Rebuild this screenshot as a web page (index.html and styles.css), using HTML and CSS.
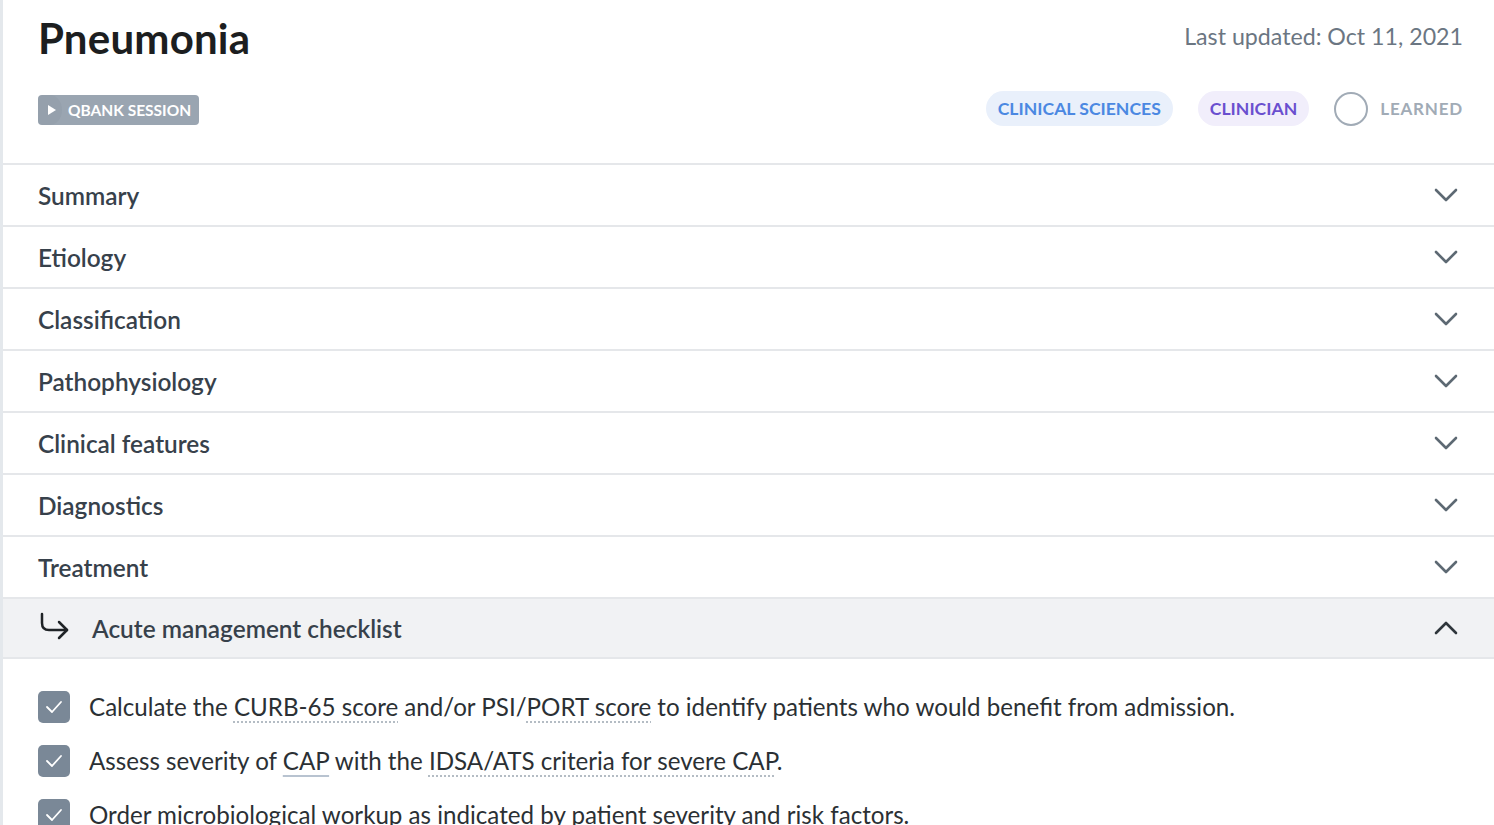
FILE: index.html
```html
<!DOCTYPE html>
<html lang="en">

<head>
    <meta charset="UTF-8">
    <meta name="viewport" content="width=device-width, initial-scale=1.0">
    <title>Pneumonia</title>
    <link rel="stylesheet" href="styles.css">
</head>

<body>

    <div class="article">
        <header class="header">
            <div class="header-top">
                <h1 class="title">Pneumonia</h1>
                <span class="updated">Last updated: Oct 11, 2021</span>
            </div>
            <div class="header-bottom">
                <button class="qbank">
                    <span class="play"><svg width="10" height="12" viewBox="0 0 10 12"><path d="M1 1 L9 6 L1 11 Z" fill="#fff"/></svg></span>
                    QBANK SESSION
                </button>
                <div class="tags">
                    <span class="tag tag-blue">CLINICAL SCIENCES</span>
                    <span class="tag tag-purple">CLINICIAN</span>
                    <span class="learned"><span class="learned-circle"></span>LEARNED</span>
                </div>
            </div>
        </header>

        <div class="section"><span>Summary</span><svg class="chev" viewBox="0 0 24 14"><path d="M2 2 L12 12 L22 2"/></svg></div>
        <div class="section"><span>Etiology</span><svg class="chev" viewBox="0 0 24 14"><path d="M2 2 L12 12 L22 2"/></svg></div>
        <div class="section"><span>Classification</span><svg class="chev" viewBox="0 0 24 14"><path d="M2 2 L12 12 L22 2"/></svg></div>
        <div class="section"><span>Pathophysiology</span><svg class="chev" viewBox="0 0 24 14"><path d="M2 2 L12 12 L22 2"/></svg></div>
        <div class="section"><span>Clinical features</span><svg class="chev" viewBox="0 0 24 14"><path d="M2 2 L12 12 L22 2"/></svg></div>
        <div class="section"><span>Diagnostics</span><svg class="chev" viewBox="0 0 24 14"><path d="M2 2 L12 12 L22 2"/></svg></div>
        <div class="section"><span>Treatment</span><svg class="chev" viewBox="0 0 24 14"><path d="M2 2 L12 12 L22 2"/></svg></div>

        <div class="section section-open">
            <div class="sub-title">
                <svg class="sub-arrow" width="32" height="32" viewBox="0 0 32 32">
                    <path d="M4 2 V11 Q4 18 11 18 H29"/>
                    <path d="M21 10 L29 18 L21 26"/>
                </svg>
                <span>Acute management checklist</span>
            </div>
            <svg class="chev chev-up" viewBox="0 0 24 14"><path d="M2 12 L12 2 L22 12"/></svg>
        </div>

        <ul class="checklist">
            <li>
                <span class="check"><svg width="18" height="14" viewBox="0 0 18 14"><path d="M2 7 L7 12 L16 2"/></svg></span>
                <span>Calculate the <span class="term">CURB-65 score</span> and/or PSI/<span class="term">PORT score</span> to identify patients who would benefit from admission.</span>
            </li>
            <li>
                <span class="check"><svg width="18" height="14" viewBox="0 0 18 14"><path d="M2 7 L7 12 L16 2"/></svg></span>
                <span>Assess severity of <span class="abbr">CAP</span> with the <span class="term">IDSA/ATS criteria for severe CAP</span>.</span>
            </li>
            <li>
                <span class="check"><svg width="18" height="14" viewBox="0 0 18 14"><path d="M2 7 L7 12 L16 2"/></svg></span>
                <span>Order microbiological workup as indicated by patient severity and risk factors.</span>
            </li>
        </ul>
    </div>

</body>

</html>
```

FILE: styles.css
```css
* {
    margin: 0;
    padding: 0;
    box-sizing: border-box;
}

body {
    font-family: Lato, "Open Sans", sans-serif;
    background-color: #fff;
    color: #2b3034;
    height: 100vh;
    overflow: hidden;
}

.article {
    border-left: 3px solid #e4e8ec;
    min-height: 100vh;
}

.header {
    padding: 12px 31px 0 35px;
    height: 163px;
}

.header-top {
    display: flex;
    justify-content: space-between;
    align-items: flex-start;
}

.title {
    font-size: 42px;
    font-weight: 700;
    color: #1c1e20;
    line-height: 52px;
    letter-spacing: 0.2px;
}

.updated {
    font-size: 23.2px;
    color: #6b7682;
    margin-top: 10px;
}

.header-bottom {
    display: flex;
    justify-content: space-between;
    align-items: center;
    margin-top: 27px;
}

.qbank {
    display: flex;
    align-items: center;
    gap: 6px;
    height: 30px;
    margin-top: 3px;
    padding: 0 8px 0 0;
    border: none;
    border-radius: 4px;
    background-color: #9aa5b1;
    color: #fff;
    font-family: Lato, sans-serif;
    font-size: 15.5px;
    font-weight: 700;
    overflow: hidden;
}

.play {
    display: flex;
    align-items: center;
    justify-content: center;
    width: 24px;
    height: 30px;
    padding-left: 4px;
    border-radius: 0 50% 50% 0;
    background-color: rgba(80, 100, 120, 0.07);
}

.tags {
    display: flex;
    align-items: center;
    gap: 25px;
}

.tag {
    font-size: 17.6px;
    font-weight: 700;
    padding: 7px 12px;
    border-radius: 18px;
    line-height: 21px;
}

.tag-blue {
    background-color: #e9f0fb;
    color: #4b88e2;
}

.tag-purple {
    background-color: #f1eefb;
    color: #6a4fcf;
}

.learned {
    display: flex;
    align-items: center;
    gap: 12px;
    font-size: 17px;
    font-weight: 700;
    letter-spacing: 0.8px;
    color: #a1abb6;
}

.learned-circle {
    width: 34px;
    height: 34px;
    border: 2px solid #a1abb6;
    border-radius: 50%;
}

.section {
    display: flex;
    justify-content: space-between;
    align-items: center;
    height: 62px;
    padding: 0 36px 0 35px;
    border-top: 2px solid #e5e7ea;
    font-size: 24.4px;
    font-weight: 600;
    color: #37414b;
}

.section-open {
    background-color: #f1f2f4;
    border-bottom: 2px solid #e5e7ea;
    color: #37414b;
}

.sub-title {
    display: flex;
    align-items: center;
    gap: 22px;
}

.sub-arrow path {
    fill: none;
    stroke: #1f2326;
    stroke-width: 2.5;
    stroke-linecap: round;
    stroke-linejoin: round;
}

.chev {
    width: 24px;
    height: 14px;
}

.chev path {
    fill: none;
    stroke: #5d6973;
    stroke-width: 2.6;
    stroke-linecap: round;
    stroke-linejoin: round;
}

.chev-up path {
    stroke: #2f363c;
}

.checklist {
    list-style: none;
    padding: 32px 0 0 35px;
    display: flex;
    flex-direction: column;
    gap: 22px;
}

.checklist li {
    display: flex;
    align-items: center;
    gap: 19px;
    font-size: 24.15px;
    line-height: 32px;
    color: #2b3034;
}

.check {
    flex: 0 0 auto;
    display: flex;
    align-items: center;
    justify-content: center;
    width: 32px;
    height: 32px;
    border-radius: 5px;
    background-color: #7a8897;
}

.check path {
    fill: none;
    stroke: #fff;
    stroke-width: 1.8;
    stroke-linecap: round;
    stroke-linejoin: round;
}

.term {
    text-decoration: underline dotted #b4bcc4;
    text-decoration-thickness: 2px;
    text-underline-offset: 5px;
}

.abbr {
    text-decoration: underline solid #b8c3d0;
    text-decoration-thickness: 1.5px;
    text-underline-offset: 5px;
}
```
